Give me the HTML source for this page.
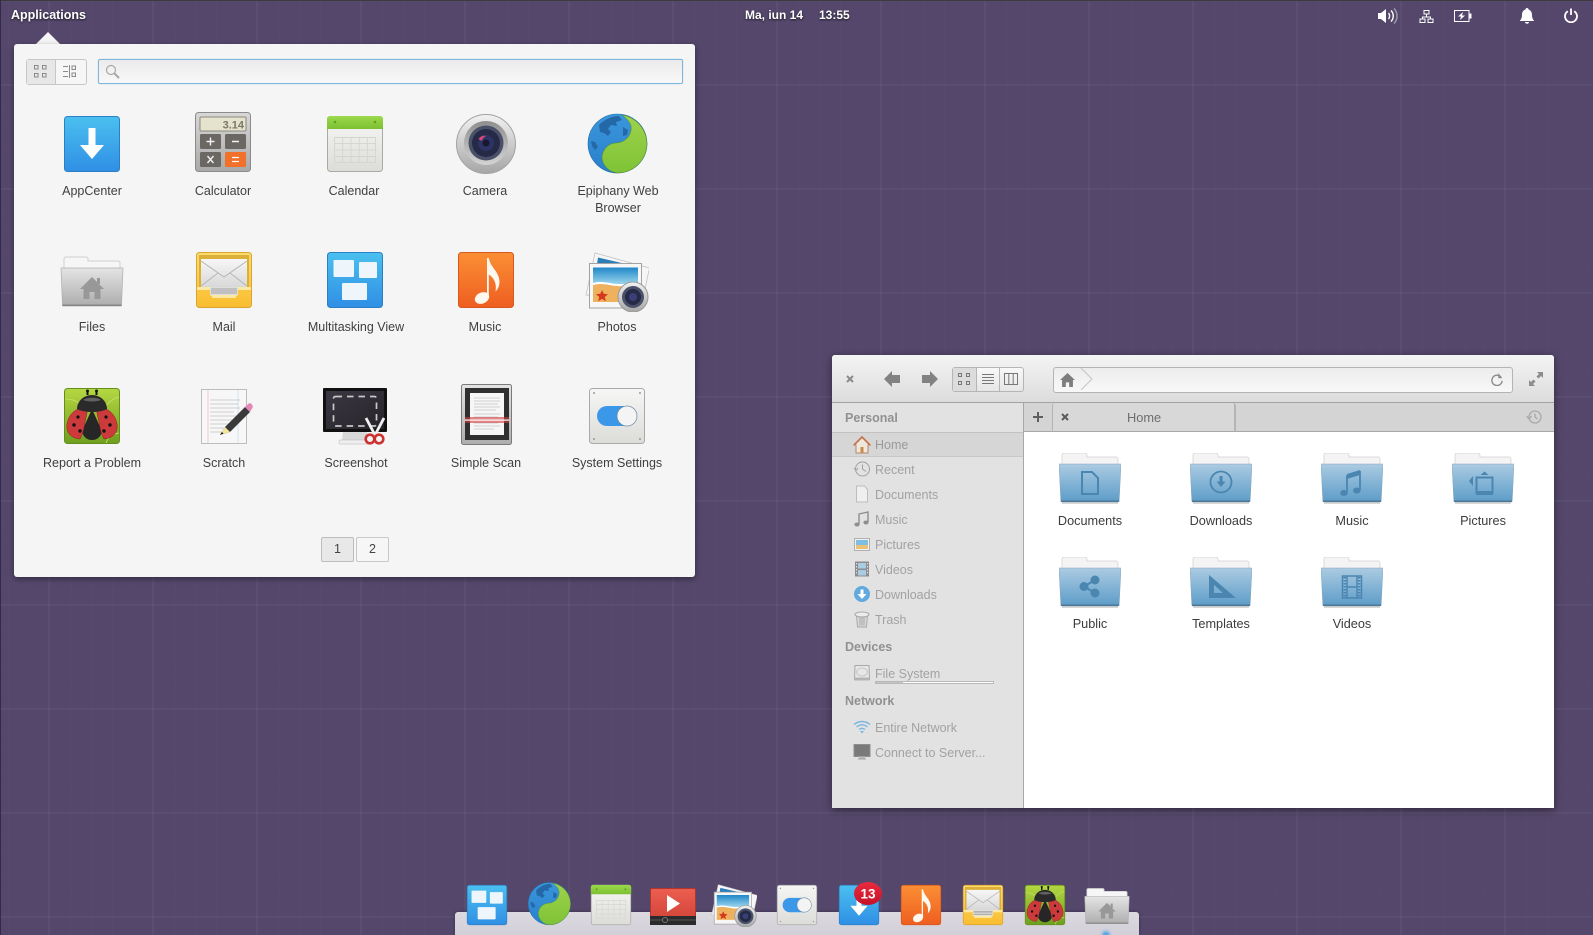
<!DOCTYPE html>
<html><head><meta charset="utf-8"><title>Desktop</title>
<style>
html,body{margin:0;padding:0;width:1593px;height:935px;overflow:hidden}
body{position:relative;font-family:"Liberation Sans",sans-serif;background-color:#54476b;
background-image:
linear-gradient(90deg,rgba(255,255,255,.035) 0,rgba(255,255,255,.035) 2px,transparent 2px),
linear-gradient(0deg,rgba(255,255,255,.032) 0,rgba(255,255,255,.032) 2px,transparent 2px),
linear-gradient(90deg,rgba(255,255,255,.012) 0,rgba(255,255,255,.012) 1px,transparent 1px),
linear-gradient(0deg,rgba(255,255,255,.012) 0,rgba(255,255,255,.012) 1px,transparent 1px);
background-size:104px 104px,104px 104px,20.8px 20.8px,20.8px 20.8px;
background-position:48px 0,0 -18px,8px 0,0 2px}
.a,.t,.c,svg.i,svg.s{position:absolute}
.t,.c{line-height:16px;white-space:nowrap}
.c{text-align:center;width:130px}
svg.i{width:64px;height:64px;overflow:visible}
svg.d{width:46px;height:46px}
svg.s{width:18px;height:18px;overflow:visible}
.pn{color:#fff;font-weight:bold;font-size:12.5px;text-shadow:0 1px 2px rgba(0,0,0,.7)}
.lb{font-size:12.5px;color:#3f3f3f}
.sh{font-size:12.5px;font-weight:bold;color:#919191}
.si{font-size:12.5px;color:#a2a2a2}
.fl{font-size:12.7px;color:#3c3c3c}
</style></head><body>

<svg width="0" height="0" style="position:absolute">
<defs>
<linearGradient id="gBlue" x1="0" y1="0" x2="0" y2="1"><stop offset="0" stop-color="#4bc0ef"/><stop offset="1" stop-color="#2f8fe5"/></linearGradient>
<linearGradient id="gGrey" x1="0" y1="0" x2="0" y2="1"><stop offset="0" stop-color="#d8d8d8"/><stop offset="1" stop-color="#a8a8a8"/></linearGradient>
<linearGradient id="gPale" x1="0" y1="0" x2="0" y2="1"><stop offset="0" stop-color="#f6f6f4"/><stop offset="1" stop-color="#dcdcd9"/></linearGradient>
<linearGradient id="gGreen" x1="0" y1="0" x2="0" y2="1"><stop offset="0" stop-color="#9cd94d"/><stop offset="1" stop-color="#7cc030"/></linearGradient>
<linearGradient id="gOrange" x1="0" y1="0" x2="0" y2="1"><stop offset="0" stop-color="#fb8f34"/><stop offset="1" stop-color="#ee5e21"/></linearGradient>
<linearGradient id="gFolder" x1="0" y1="0" x2="0" y2="1"><stop offset="0" stop-color="#e4e4e4"/><stop offset="1" stop-color="#adadad"/></linearGradient>
<linearGradient id="gBF" x1="0" y1="0" x2="0" y2="1"><stop offset="0" stop-color="#abcbe2"/><stop offset="1" stop-color="#5c9cc8"/></linearGradient>
<linearGradient id="gYel" x1="0" y1="0" x2="0" y2="1"><stop offset="0" stop-color="#fddc6a"/><stop offset="1" stop-color="#f9bd2f"/></linearGradient>
<linearGradient id="gBug" x1="0" y1="0" x2="0" y2="1"><stop offset="0" stop-color="#b5d742"/><stop offset="1" stop-color="#6f9e1f"/></linearGradient>
<linearGradient id="gEnv" x1="0" y1="0" x2="0" y2="1"><stop offset="0" stop-color="#f7f7f7"/><stop offset="1" stop-color="#d8d8d8"/></linearGradient>
<linearGradient id="gSky" x1="0" y1="0" x2="0" y2="1"><stop offset="0" stop-color="#1f86c8"/><stop offset="1" stop-color="#a6dcef"/></linearGradient>
<linearGradient id="gCam" x1="0" y1="0" x2="0" y2="1"><stop offset="0" stop-color="#f2f2f2"/><stop offset="1" stop-color="#a6a6a6"/></linearGradient>
<linearGradient id="gRing" x1="0" y1="0" x2="0" y2="1"><stop offset="0" stop-color="#8e8e8e"/><stop offset="1" stop-color="#d4d4d4"/></linearGradient>
<linearGradient id="gEG" x1="0" y1="0" x2="0" y2="1"><stop offset="0" stop-color="#9ed24a"/><stop offset="1" stop-color="#7fc336"/></linearGradient>
<linearGradient id="gEB" x1="0" y1="0" x2="0" y2="1"><stop offset="0" stop-color="#3a97dc"/><stop offset="1" stop-color="#2a7fcb"/></linearGradient>
<linearGradient id="gRed" x1="0" y1="0" x2="0" y2="1"><stop offset="0" stop-color="#ec5f50"/><stop offset="1" stop-color="#cf3f36"/></linearGradient>
<linearGradient id="gBadge" x1="0" y1="0" x2="0" y2="1"><stop offset="0" stop-color="#ea2a3e"/><stop offset="1" stop-color="#c51228"/></linearGradient>
<linearGradient id="gScr" x1="0" y1="0" x2="1" y2="1"><stop offset="0" stop-color="#3c3842"/><stop offset="1" stop-color="#26232a"/></linearGradient>

<symbol id="appcenter" viewBox="0 0 64 64"><rect x="4.500" y="4.500" width="55" height="55" rx="3" fill="url(#gBlue)" stroke="#2d7fc4"/><path d="M28.500 16h7v17h8.500L32 47 20 33h8.500z" fill="#fff"/></symbol>

<symbol id="calc" viewBox="0 0 64 64"><rect x="4.500" y="0.500" width="55" height="59" rx="3" fill="url(#gGrey)" stroke="#8b8b8b"/><rect x="9" y="5" width="46" height="14" rx="1" fill="#e5e3cd" stroke="#8a897a"/><text x="53" y="16.500" text-anchor="end" font-family="Liberation Sans" font-weight="bold" font-size="11" fill="#7a7866">3.14</text><rect x="9" y="22" width="21" height="15" rx="1.500" fill="#6b6864"/><rect x="34" y="22" width="21" height="15" rx="1.500" fill="#6b6864"/><rect x="9" y="40" width="21" height="15" rx="1.500" fill="#6b6864"/><rect x="34" y="40" width="21" height="15" rx="1.500" fill="#f1702a"/><path d="M19.500 25.500v8M15.500 29.500h8M41 29.500h7M16.500 44l6 7M22.500 44l-6 7" stroke="#f2f2f2" stroke-width="1.400" fill="none"/><path d="M41 45.500h7M41 49.500h7" stroke="#fff" stroke-width="1.200"/></symbol>

<symbol id="calendar" viewBox="0 0 64 64"><rect x="4.500" y="4.500" width="55" height="55" rx="3" fill="url(#gPale)" stroke="#a9a9a6"/><path d="M4 17V7a3 3 0 0 1 3-3h50a3 3 0 0 1 3 3v10z" fill="url(#gGreen)"/><circle cx="12" cy="10" r="1.300" fill="#5f9f22"/><circle cx="52" cy="10" r="1.300" fill="#5f9f22"/><path d="M11.500 25.500h41v25h-41zM11.500 31.500h41M11.500 38h41M11.500 44.500h41M19.700 25.500v25M28 25.500v25M36.200 25.500v25M44.400 25.500v25" fill="none" stroke="#d6d6d1"/></symbol>

<symbol id="camera" viewBox="0 0 64 64"><circle cx="32" cy="32" r="29.500" fill="url(#gCam)" stroke="#a3a3a3"/><circle cx="32" cy="31" r="22" fill="url(#gRing)"/><circle cx="32" cy="31" r="17.500" fill="#4a5068"/><circle cx="32" cy="31" r="14" fill="#252b47"/><circle cx="32" cy="31" r="8" fill="#2e3365"/><circle cx="32" cy="31" r="3.500" fill="#15182f"/><path d="M24.500 27c2-3 5-4 7.500-3-2 1-3.500 3-4.500 5z" fill="#d24a78"/></symbol>

<symbol id="epiphany" viewBox="0 0 64 64"><ellipse cx="32.500" cy="31.500" rx="29.500" ry="29.500" fill="url(#gEB)" stroke="#1f6ba8" stroke-width=".6"/><path d="M14 13c5-5 12-9 20-9l3 4-6 2 1 4-6-1-3 4 3 3-3 4-4-3-4-1zM38 15l5 3-1 5-4 1zM6 29l4 1 3 5-3 3-3-4z" fill="#2468a8"/><path d="M37 3C44 8 47 13 46 18 45 26 38 31 30 31 22 32 17 39 17 46 18 54 24 60 33 61A29.500 29.500 0 0 0 62 32 29.500 29.500 0 0 0 37 3Z" fill="url(#gEG)" stroke="#4e8a24" stroke-width=".5"/></symbol>

<symbol id="files" viewBox="0 0 64 64"><path d="M4 21V11a2 2 0 0 1 2-2h20a2 2 0 0 1 2 2v2h30a2 2 0 0 1 2 2v6z" fill="#f6f6f6" stroke="#d0d0d0"/><path d="M1 20h62l-1.500 38h-59z" fill="url(#gFolder)" stroke="#aeaeae" stroke-width=".7"/><rect x="2.500" y="56.500" width="59" height="1.500" fill="#858585"/><path d="M32 29L44 41h-3.500v10h-6v-7h-5v7h-6V41H20z" fill="#989898"/><rect x="37" y="30" width="3" height="6" fill="#989898"/></symbol>

<symbol id="mail" viewBox="0 0 64 64"><rect x="4.500" y="4.500" width="55" height="55" rx="3" fill="url(#gYel)" stroke="#d9a431"/><rect x="7" y="7" width="50" height="32" fill="#dcae3a"/><path d="M9 11h46v28H9z" fill="url(#gEnv)"/><path d="M9 13l23 16L55 13M9 38l17-13M55 38L38 25" fill="none" stroke="#b5b5b5"/><path d="M5 39h13v7a2 2 0 0 0 2 2h24a2 2 0 0 0 2-2v-7h13v3H5z" fill="#fce8a3"/><path d="M18 39h28v8H18z" fill="#dedede"/><path d="M19 41h26M19 43h26M19 45h26" stroke="#a2a2a2"/><rect x="20" y="47" width="24" height="3" rx="1" fill="#fce8a3"/></symbol>

<symbol id="multi" viewBox="0 0 64 64"><rect x="4.500" y="4.500" width="55" height="55" rx="3" fill="url(#gBlue)" stroke="#2d7fc4"/><rect x="10.500" y="12" width="20.500" height="17" rx="1" fill="#eef6fb"/><rect x="36" y="14" width="18" height="16" rx="1" fill="#eef6fb"/><rect x="19" y="35" width="25" height="17" rx="1" fill="#eef6fb"/></symbol>

<symbol id="music" viewBox="0 0 64 64"><rect x="4.500" y="4.500" width="55" height="55" rx="3" fill="url(#gOrange)" stroke="#d8581e"/><path d="M33 10h1.800c1 9 10.700 13.500 10.700 24 0 4-1.800 7.500-4 9.500 1.300-6.500-.5-13-6.700-17V49h-1.800z" fill="#fff8ee"/><ellipse cx="28" cy="50" rx="7.500" ry="5.500" transform="rotate(-25 28 50)" fill="#fff8ee"/></symbol>

<symbol id="photos" viewBox="0 0 64 64"><path d="M10 5l54.500 15L58 50 1 47z" fill="#f6f6f6" stroke="#bdbdbd" stroke-width=".7"/><path d="M13 9.500L41 16H12z" fill="#2b7db9"/><rect x="4.500" y="15.500" width="52" height="44.500" fill="#f7f7f7" stroke="#a2a2a2"/><rect x="8" y="19.500" width="45" height="18" fill="url(#gSky)"/><path d="M8 37c12-3 18 2 30 1 6 0 10 1 15 3v13H8z" fill="#eeb25f"/><path d="M8 35c12-3 18 2 30 1 6 0 10 1 15 3v2c-5-2-9-3-15-3-12 1-18-4-30-1z" fill="#fff"/><path d="M17 42l1.700 3.800 4.300.4-3.200 2.800 1 4.200-3.800-2.300-3.800 2.300 1-4.200-3.200-2.800 4.300-.4z" fill="#d6381e"/><circle cx="48" cy="49" r="15" fill="url(#gCam)" stroke="#9a9a9a"/><circle cx="48" cy="49" r="11" fill="#4a5068"/><circle cx="48" cy="49" r="8" fill="#252b47"/><circle cx="48" cy="49" r="4" fill="#3a3f78"/></symbol>

<symbol id="bug" viewBox="0 0 64 64"><rect x="4.500" y="4.500" width="55" height="55" rx="3" fill="url(#gBug)" stroke="#648f1c"/><path d="M5 15c8 0 13 2 16 7M59 13c-7 2-11 5-13 10M46 59c2-6 7-9 13-10" fill="none" stroke="#c7e36c" stroke-width=".8"/><path d="M27.500 11V8M36.500 11V8" stroke="#111" stroke-width="2"/><circle cx="27.500" cy="7" r="1.500" fill="#111"/><circle cx="36.500" cy="7" r="1.500" fill="#111"/><path d="M32 25l10 22c-1 6-5 9-10 9s-9-3-10-9z" fill="#262626"/><path d="M28 24C19 22 9 28 7 40c-1 8 3 14 13 15 1-2 2-4 3-7z" fill="#cc3a3b" stroke="#8a1f20" stroke-width=".5"/><path d="M36 24c9-2 19 4 21 16 1 8-3 14-13 15-1-2-2-4-3-7z" fill="#cc3a3b" stroke="#8a1f20" stroke-width=".5"/><path d="M17 25c0-8 7-14 15-14s15 6 15 14c-8 4-22 4-30 0z" fill="#2a2a2a"/><path d="M23 16c4-3 14-3 18 0-5 2-13 2-18 0z" fill="#626262"/><g fill="#111"><circle cx="18" cy="33" r="1.600"/><circle cx="14" cy="41" r="1.700"/><circle cx="20" cy="47" r="1.700"/><circle cx="46" cy="33" r="1.600"/><circle cx="50" cy="41" r="1.700"/><circle cx="44" cy="47" r="1.700"/></g></symbol>

<symbol id="scratch" viewBox="0 0 64 64"><rect x="9.500" y="5.500" width="45" height="54" fill="#f7f7f8" stroke="#bdbdbd"/><path d="M16 6v53" stroke="#f0caca"/><path d="M46 6v53" stroke="#d4e0f0"/><path d="M18 16h30M18 20h28M18 24h30M18 28h24M18 32h26M18 36h22M18 40h20M18 44h14M18 48h16" stroke="#a8a8a8" stroke-width=".6"/><path d="M28 51l5-8 20-20 5 5-20 20z" fill="#3a3a3a"/><path d="M53 23l3-3c1-1 3-1 3.500 0l1 1.500c.7 1 0 2.500-.5 3L58 28z" fill="#e486b8"/><path d="M28 51l5-8 5 5z" fill="#f3e59a"/><path d="M28 51l2-3 1.500 1.500z" fill="#111"/></symbol>

<symbol id="screenshot" viewBox="0 0 64 64"><path d="M20 48h24l1 8H19z" fill="#d8d8d8"/><rect x="16" y="56" width="30" height="4" rx="1" fill="#efefef" stroke="#b4b4b4" stroke-width=".5"/><rect x="0" y="4" width="64" height="44" rx="1" fill="#111"/><rect x="3" y="7" width="58" height="38" fill="url(#gScr)"/><rect x="10.500" y="12.500" width="43" height="29.500" rx="2" fill="none" stroke="#c8c8c8" stroke-width="1.700" stroke-dasharray="6.500 5"/><path d="M43 34l9 17M61 34l-9 17" stroke="#f0f0f0" stroke-width="2.800"/><circle cx="47" cy="55" r="4.300" fill="#f3f3f3" stroke="#cc3232" stroke-width="2.600"/><circle cx="56" cy="55" r="4.300" fill="#f3f3f3" stroke="#cc3232" stroke-width="2.600"/></symbol>

<symbol id="scan" viewBox="0 0 64 64"><rect x="6.500" y="0.500" width="50" height="60" rx="2" fill="url(#gFolder)" stroke="#7a7a7a"/><rect x="10" y="4" width="44" height="52" fill="#2f2f2f"/><rect x="15" y="9" width="34" height="42" fill="#f6f6f6"/><path d="M19 14h26M19 17h26M19 20h24M19 23h26M19 26h22M19 30h26M19 33h24M19 39h24M19 42h26M19 45h20" stroke="#aaa" stroke-width=".6"/><rect x="10" y="33" width="44" height="6" fill="#d23c3c" opacity=".6"/><rect x="10" y="35.500" width="44" height="1.200" fill="#fff"/></symbol>

<symbol id="settings" viewBox="0 0 64 64"><rect x="4.500" y="4.500" width="55" height="55" rx="3" fill="url(#gPale)" stroke="#a9a9a9"/><g fill="#9a9a9a"><circle cx="9" cy="9" r="1"/><circle cx="55" cy="9" r="1"/><circle cx="9" cy="55" r="1"/><circle cx="55" cy="55" r="1"/></g><rect x="12" y="22" width="40" height="20" rx="10" fill="#3b97e8"/><circle cx="42" cy="32" r="10" fill="#f4f4f4" stroke="#6a8aa5" stroke-width=".7"/></symbol>

<symbol id="folder" viewBox="0 0 62 51"><path d="M3 12V2a2 2 0 0 1 2-2h21a2 2 0 0 1 2 2v2h29a2 2 0 0 1 2 2v6z" fill="#f4f4f4" stroke="#cfcfcf" stroke-width=".7"/><rect x="3" y="49" width="56" height="2" fill="#d8d8d8"/><path d="M0 11h62l-1.800 37a1 1 0 0 1-1 1H2.800a1 1 0 0 1-1-1z" fill="url(#gBF)" stroke="#8aa5ba" stroke-width=".5"/><rect x="2" y="47.500" width="58" height="1.500" fill="#4f7896"/></symbol>
</defs></svg>

<!-- top panel -->
<div class="a" style="left:0;top:0;width:1593px;height:1px;background:#3d3a3e"></div>
<div class="a" style="left:0;top:0;width:1px;height:935px;background:#33294a"></div>
<div class="t pn" style="left:11px;top:7px">Applications</div>
<div class="t pn" style="left:745px;top:7px;font-size:12px">Ma, iun 14</div>
<div class="t pn" style="left:819px;top:7px;font-size:12px">13:55</div>

<svg class="a" style="left:1376px;top:7px" width="24" height="18" viewBox="0 0 24 18"><path d="M2 6h3l5-4v14l-5-4H2z" fill="#fff"/><path d="M12.500 6c1.500 1.500 1.500 4.500 0 6M15 3.500c3 3 3 8 0 11" stroke="#fff" stroke-width="1.400" fill="none"/><path d="M18 1.500c4 4 4 11 0 15" stroke="#fff" stroke-opacity=".45" stroke-width="1.400" fill="none"/></svg>
<svg class="a" style="left:1419px;top:10px" width="15" height="14" viewBox="0 0 15 14" fill="none" stroke="#fff"><rect x="5" y=".5" width="5" height="3.500"/><rect x="1" y="9" width="5" height="3.500"/><rect x="9" y="9" width="5" height="3.500"/><path d="M7.500 4v3M3.500 9V7h8v2"/></svg>
<svg class="a" style="left:1454px;top:10px" width="18" height="12" viewBox="0 0 18 12"><rect x=".5" y=".5" width="14.500" height="11" fill="none" stroke="#fff"/><rect x="15.500" y="3.500" width="2" height="5" fill="#fff"/><path d="M9 2L4 6.500h3L6 10l5-4.500H8z" fill="#fff"/></svg>
<svg class="a" style="left:1520px;top:8px" width="14" height="16" viewBox="0 0 14 16"><path d="M7 0c1 0 1.500.7 1.500 1.500C11 2.300 12 4.500 12 7c0 3 1 4.500 2 5.500v.5H0v-.5C1 11.500 2 10 2 7c0-2.500 1-4.700 3.500-5.500C5.500.7 6 0 7 0z" fill="#fff"/><path d="M5 14h4c0 1-.9 1.800-2 1.800S5 15 5 14z" fill="#fff"/></svg>
<svg class="a" style="left:1564px;top:8px" width="14" height="15" viewBox="0 0 14 15" fill="none" stroke="#fff" stroke-width="1.800"><path d="M7 .5v6.500"/><path d="M3.800 3.200a6 6 0 1 0 6.400 0"/></svg>

<!-- app menu -->
<svg class="a" style="left:35px;top:31px" width="26" height="14"><path d="M0 14L13 1l13 13z" fill="#f5f5f5"/></svg>
<div class="a" style="left:14px;top:44px;width:681px;height:533px;background:#f5f5f5;border-radius:3px;box-shadow:0 2px 6px rgba(0,0,0,.4)"></div>
<div class="a" style="left:26px;top:59px;width:59px;height:24px;border:1px solid #c6c6c6;border-radius:3px;background:#f6f6f6"></div>
<div class="a" style="left:27px;top:60px;width:28px;height:24px;background:#e7e7e7;border-right:1px solid #c6c6c6"></div>
<svg class="a" style="left:33px;top:64px" width="15" height="15" viewBox="0 0 15 15" fill="none" stroke="#8a8a8a"><rect x="1.500" y="1.500" width="3.500" height="3.500"/><rect x="9.500" y="1.500" width="3.500" height="3.500"/><rect x="1.500" y="9.500" width="3.500" height="3.500"/><rect x="9.500" y="9.500" width="3.500" height="3.500"/></svg>
<svg class="a" style="left:62px;top:64px" width="15" height="15" viewBox="0 0 15 15" fill="none" stroke="#8a8a8a"><path d="M1 2.500h5M1 7.500h5M1 12.500h5M7.500 1v13"/><rect x="10" y="2" width="3.500" height="3.500"/><rect x="10" y="9" width="3.500" height="3.500"/></svg>
<div class="a" style="left:98px;top:59px;width:583px;height:23px;border:1px solid #7fb6dd;border-radius:2px;background:linear-gradient(#ebebeb,#f8f8f8);box-shadow:0 0 1px #9cc8e8"></div>
<svg class="a" style="left:105px;top:64px" width="16" height="15" viewBox="0 0 16 15" fill="none" stroke="#a8a8a8"><circle cx="6" cy="6" r="4.500" stroke-width="1.200"/><path d="M9.500 9.500l4.500 4.500" stroke-width="2"/></svg>

<svg class="i" style="left:60px;top:112px"><use href="#appcenter"/></svg>
<svg class="i" style="left:191px;top:112px"><use href="#calc"/></svg>
<svg class="i" style="left:323px;top:112px"><use href="#calendar"/></svg>
<svg class="i" style="left:454px;top:112px"><use href="#camera"/></svg>
<svg class="i" style="left:585px;top:112px"><use href="#epiphany"/></svg>
<svg class="i" style="left:60px;top:248px"><use href="#files"/></svg>
<svg class="i" style="left:192px;top:248px"><use href="#mail"/></svg>
<svg class="i" style="left:323px;top:248px"><use href="#multi"/></svg>
<svg class="i" style="left:454px;top:248px"><use href="#music"/></svg>
<svg class="i" style="left:585px;top:248px"><use href="#photos"/></svg>
<svg class="i" style="left:60px;top:384px"><use href="#bug"/></svg>
<svg class="i" style="left:192px;top:384px"><use href="#scratch"/></svg>
<svg class="i" style="left:323px;top:384px"><use href="#screenshot"/></svg>
<svg class="i" style="left:455px;top:384px"><use href="#scan"/></svg>
<svg class="i" style="left:585px;top:384px"><use href="#settings"/></svg>

<div class="c lb" style="left:27px;top:183px">AppCenter</div>
<div class="c lb" style="left:158px;top:183px">Calculator</div>
<div class="c lb" style="left:289px;top:183px">Calendar</div>
<div class="c lb" style="left:420px;top:183px">Camera</div>
<div class="c lb" style="left:553px;top:183px">Epiphany Web</div>
<div class="c lb" style="left:553px;top:200px">Browser</div>
<div class="c lb" style="left:27px;top:319px">Files</div>
<div class="c lb" style="left:159px;top:319px">Mail</div>
<div class="c lb" style="left:291px;top:319px">Multitasking View</div>
<div class="c lb" style="left:420px;top:319px">Music</div>
<div class="c lb" style="left:552px;top:319px">Photos</div>
<div class="c lb" style="left:27px;top:455px">Report a Problem</div>
<div class="c lb" style="left:159px;top:455px">Scratch</div>
<div class="c lb" style="left:291px;top:455px">Screenshot</div>
<div class="c lb" style="left:421px;top:455px">Simple Scan</div>
<div class="c lb" style="left:552px;top:455px">System Settings</div>

<div class="a" style="left:321px;top:537px;width:31px;height:23px;border:1px solid #bdbdbd;border-radius:2px;background:#e8e8e8;font-size:12.500px;line-height:23px;text-align:center;color:#444">1</div>
<div class="a" style="left:356px;top:537px;width:31px;height:23px;border:1px solid #c8c8c8;border-radius:2px;background:#f6f6f6;font-size:12.500px;line-height:23px;text-align:center;color:#444">2</div>

<!-- files window -->
<div class="a" style="left:832px;top:355px;width:722px;height:453px;background:#fff;border-radius:3px 3px 0 0;box-shadow:0 2px 8px rgba(0,0,0,.45)"></div>
<div class="a" style="left:832px;top:355px;width:722px;height:47px;background:linear-gradient(#f4f4f4,#dcdcdc);border-bottom:1px solid #a3a3a3;border-radius:3px 3px 0 0"></div>
<svg class="a" style="left:845px;top:374px" width="10" height="10" viewBox="0 0 10 10"><path d="M2 2l6 6M8 2L2 8" stroke="#8a8a8a" stroke-width="2"/></svg>
<svg class="a" style="left:884px;top:371px" width="17" height="16" viewBox="0 0 17 16"><path d="M8 0v4h8v8H8v4L0 8z" fill="#828282"/></svg>
<svg class="a" style="left:921px;top:371px" width="17" height="16" viewBox="0 0 17 16"><path d="M9 0v4H1v8h8v4l8-8z" fill="#828282"/></svg>
<div class="a" style="left:952px;top:367px;width:70px;height:23px;border:1px solid #b5b5b5;border-radius:3px;background:linear-gradient(#f8f8f8,#e6e6e6)"></div>
<div class="a" style="left:953px;top:368px;width:23px;height:23px;background:#dcdcdc;border-right:1px solid #b5b5b5"></div>
<div class="a" style="left:999px;top:368px;width:1px;height:23px;background:#b5b5b5"></div>
<svg class="a" style="left:957px;top:372px" width="14" height="14" viewBox="0 0 14 14" fill="none" stroke="#777"><rect x="1.500" y="1.500" width="3" height="3"/><rect x="9.500" y="1.500" width="3" height="3"/><rect x="1.500" y="9.500" width="3" height="3"/><rect x="9.500" y="9.500" width="3" height="3"/></svg>
<svg class="a" style="left:981px;top:372px" width="14" height="14" viewBox="0 0 14 14" stroke="#777"><path d="M1 2.500h12M1 5.500h12M1 8.500h12M1 11.500h12"/></svg>
<svg class="a" style="left:1004px;top:372px" width="14" height="14" viewBox="0 0 14 14" fill="none" stroke="#777"><rect x=".5" y="1.500" width="13" height="11"/><path d="M4.800 1.500v11M9.200 1.500v11"/></svg>
<div class="a" style="left:1053px;top:367px;width:458px;height:24px;border:1px solid #b4b4b4;border-radius:3px;background:linear-gradient(#ececec,#f8f8f8)"></div>
<svg class="a" style="left:1060px;top:373px" width="15" height="14" viewBox="0 0 16 15"><path d="M8 0l8 7.500h-2.200V15h-4v-5H6.200v5h-4V7.500H0z" fill="#7d7d7d"/></svg>
<svg class="a" style="left:1080px;top:368px" width="13" height="22" viewBox="0 0 13 22"><path d="M1 0l11 11L1 22" fill="none" stroke="#c4c4c4"/></svg>
<svg class="a" style="left:1491px;top:373px" width="12" height="13" viewBox="0 0 14 15" fill="none"><path d="M11.500 4.500A6 6 0 1 0 13 9" stroke="#8c8c8c" stroke-width="1.600"/><path d="M8.500 0v6h4.800z" fill="#8c8c8c"/></svg>
<svg class="a" style="left:1529px;top:372px" width="14" height="14" viewBox="0 0 14 14" fill="#8c8c8c"><path d="M8 0h6v6l-2-2-2.500 2.500-2-2L10 2zM0 8l2 2 2.500-2.500 2 2L4 12l2 2H0z"/></svg>

<!-- sidebar -->
<div class="a" style="left:832px;top:403px;width:191px;height:405px;background:#e2e2e2;border-right:1px solid #a8a8a8"></div>
<div class="t sh" style="left:845px;top:410px">Personal</div>
<div class="a" style="left:832px;top:432px;width:191px;height:23px;background:#d6d6d6;border-top:1px solid #c2c2c2;border-bottom:1px solid #c8c8c8"></div>
<div class="t si" style="left:875px;top:437px;color:#9a9a9a">Home</div>
<div class="t si" style="left:875px;top:462px">Recent</div>
<div class="t si" style="left:875px;top:487px">Documents</div>
<div class="t si" style="left:875px;top:512px">Music</div>
<div class="t si" style="left:875px;top:537px">Pictures</div>
<div class="t si" style="left:875px;top:562px">Videos</div>
<div class="t si" style="left:875px;top:587px">Downloads</div>
<div class="t si" style="left:875px;top:612px">Trash</div>
<div class="t sh" style="left:845px;top:639px">Devices</div>
<div class="t si" style="left:875px;top:666px">File System</div>
<div class="a" style="left:875px;top:681px;width:117px;height:1px;border:1px solid #b8b8b8;background:#fff"></div>
<div class="a" style="left:876px;top:682px;width:27px;height:1px;background:#c4c4c4"></div>
<div class="t sh" style="left:845px;top:693px">Network</div>
<div class="t si" style="left:875px;top:720px">Entire Network</div>
<div class="t si" style="left:875px;top:745px">Connect to Server...</div>

<svg class="s" style="left:853px;top:436px" viewBox="0 0 18 18"><path d="M9 1L17 9h-2v8H3V9H1z" fill="#efe6dc" stroke="#b5876a"/><path d="M1 9l8-8 8 8" fill="none" stroke="#c6714a" stroke-width="1.600"/><rect x="7.500" y="11" width="3" height="6" fill="#c98a4d"/></svg>
<svg class="s" style="left:853px;top:460px" viewBox="0 0 18 18" fill="none" stroke="#a0a0a0"><circle cx="9.500" cy="9" r="7"/><path d="M9.500 4.500V9l3.500 2.500"/><path d="M1 8l2 2.500L5 8" /></svg>
<svg class="s" style="left:853px;top:485px" viewBox="0 0 18 18"><path d="M3.500 1h8l3 3.500v12.500h-11z" fill="#efefef" stroke="#bdbdbd"/></svg>
<svg class="s" style="left:853px;top:510px" viewBox="0 0 18 18"><path d="M6 14V4l9-2v10" fill="none" stroke="#8e8e8e" stroke-width="1.400"/><ellipse cx="4" cy="14.500" rx="2.600" ry="2" fill="#8e8e8e"/><ellipse cx="13" cy="12.500" rx="2.600" ry="2" fill="#8e8e8e"/></svg>
<svg class="s" style="left:853px;top:535px" viewBox="0 0 18 18"><rect x="1.500" y="3.500" width="15" height="12" fill="#f2f2f2" stroke="#b0b0b0"/><rect x="3" y="5" width="12" height="5" fill="#7cbfe2"/><rect x="3" y="10" width="12" height="4" fill="#edc078"/></svg>
<svg class="s" style="left:853px;top:560px" viewBox="0 0 18 18"><rect x="2" y="1.500" width="14" height="15" fill="#8c8c8c"/><rect x="5" y="3" width="8" height="5.500" fill="#a8cce2"/><rect x="5" y="10" width="8" height="5.500" fill="#a8cce2"/><path d="M3.500 3v12M14.500 3v12" stroke="#ddd" stroke-dasharray="1.500 1.500"/></svg>
<svg class="s" style="left:853px;top:585px" viewBox="0 0 18 18"><circle cx="9" cy="9" r="8" fill="#62a9df"/><path d="M7.500 4.500h3V9h3L9 14 4.500 9h3z" fill="#fff"/></svg>
<svg class="s" style="left:853px;top:610px" viewBox="0 0 18 18"><path d="M3.500 5l1 12h9l1-12z" fill="#d8d8d8" stroke="#a8a8a8"/><ellipse cx="9" cy="4.500" rx="7" ry="2.500" fill="#ececec" stroke="#a8a8a8"/><path d="M7 7.500v8M9 7.500v8M11 7.500v8" stroke="#a8a8a8"/></svg>
<svg class="s" style="left:853px;top:664px" viewBox="0 0 18 18"><path d="M2 1.500h14l.5 14h-15z" fill="#e7e7e7" stroke="#a8a8a8"/><ellipse cx="9" cy="8" rx="5.500" ry="4" fill="none" stroke="#c6c6c6"/><rect x="1.500" y="13.500" width="15" height="3" fill="#b4b4b4"/></svg>
<svg class="s" style="left:853px;top:718px" viewBox="0 0 18 18" fill="none" stroke="#79b7e0" stroke-width="1.400"><path d="M1 6.500c5-4 11-4 16 0M3.500 9c3.500-2.800 7.500-2.800 11 0M6 11.500c2-1.500 4-1.500 6 0"/><path d="M9 15.500l-2-2.500h4z" fill="#79b7e0" stroke="none"/></svg>
<svg class="s" style="left:853px;top:743px" viewBox="0 0 18 18"><rect x="1" y="1.500" width="16" height="12" fill="#7a7a7a" stroke="#8e8e8e"/><rect x="6" y="13.500" width="6" height="2" fill="#bbb"/><rect x="5" y="15.500" width="8" height="1" fill="#a2a2a2"/></svg>

<!-- tab bar -->
<div class="a" style="left:1024px;top:403px;width:530px;height:28px;background:#d4d4d4;border-bottom:1px solid #a8a8a8"></div>
<div class="a" style="left:1052px;top:403px;width:181px;height:28px;background:#d8d8d8;border-left:1px solid #b4b4b4;border-right:2px solid #b4b4b4;border-radius:3px 3px 0 0;border-bottom:1px solid #a8a8a8"></div>
<svg class="a" style="left:1032px;top:411px" width="12" height="12" viewBox="0 0 12 12"><path d="M6 1v10M1 6h10" stroke="#5f5f5f" stroke-width="2"/></svg>
<svg class="a" style="left:1060px;top:412px" width="10" height="10" viewBox="0 0 10 10"><path d="M2 2l6 6M8 2L2 8" stroke="#5a5a5a" stroke-width="2"/></svg>
<div class="t" style="left:1127px;top:410px;font-size:12.800px;color:#6e6e6e">Home</div>
<svg class="a" style="left:1526px;top:409px" width="16" height="16" viewBox="0 0 16 16" fill="none" stroke="#aaa" stroke-width="1.300"><circle cx="9" cy="8" r="6"/><path d="M9 4.500V8l2.500 2"/><path d="M0.500 7l2.500 3 2.500-3" /></svg>

<!-- folders -->
<svg class="a" style="left:1059px;top:453px;overflow:visible" width="62" height="51" viewBox="0 0 62 51"><use href="#folder"/><path d="M23 19h10l6 6v16H23z" fill="none" stroke="#4a86b0" stroke-width="2"/></svg>
<svg class="a" style="left:1190px;top:453px;overflow:visible" width="62" height="51" viewBox="0 0 62 51"><use href="#folder"/><circle cx="31" cy="29" r="10.500" fill="none" stroke="#4a86b0" stroke-width="1.800"/><path d="M29.500 23h3v5.500h3L31 34l-4.500-5.500h3z" fill="#4a86b0"/></svg>
<svg class="a" style="left:1321px;top:453px;overflow:visible" width="62" height="51" viewBox="0 0 62 51"><use href="#folder"/><path d="M26 39V23l13-4v18" fill="none" stroke="#4a86b0" stroke-width="1.800"/><path d="M26 21l13-4v5l-13 4z" fill="#4a86b0"/><ellipse cx="23" cy="40" rx="3.800" ry="3" fill="#4a86b0"/><ellipse cx="35.800" cy="37.500" rx="3.800" ry="3" fill="#4a86b0"/></svg>
<svg class="a" style="left:1452px;top:453px;overflow:visible" width="62" height="51" viewBox="0 0 62 51"><use href="#folder"/><rect x="24.500" y="24.500" width="16" height="15" fill="none" stroke="#4a86b0" stroke-width="2"/><path d="M24 38h17v4H24z" fill="#4a86b0"/><path d="M28.500 22l4-3.500 4 3.500zM21 23l-4 5 4 5z" fill="#4a86b0"/></svg>
<svg class="a" style="left:1059px;top:557px;overflow:visible" width="62" height="51" viewBox="0 0 62 51"><use href="#folder"/><path d="M36 23L25 29.500 36 36" fill="none" stroke="#4a86b0" stroke-width="2"/><circle cx="36" cy="23" r="4.500" fill="#4a86b0"/><circle cx="25" cy="29.500" r="4.500" fill="#4a86b0"/><circle cx="36" cy="36" r="4.500" fill="#4a86b0"/></svg>
<svg class="a" style="left:1190px;top:557px;overflow:visible" width="62" height="51" viewBox="0 0 62 51"><use href="#folder"/><path d="M19 18l27 23H19zM24 28v8h9z" fill="#4a86b0" fill-rule="evenodd"/></svg>
<svg class="a" style="left:1321px;top:557px;overflow:visible" width="62" height="51" viewBox="0 0 62 51"><use href="#folder"/><rect x="21.500" y="19" width="19" height="22" fill="none" stroke="#4a86b0" stroke-width="1.500"/><path d="M26 19v22M36 19v22M26 30h10" stroke="#4a86b0" stroke-width="1.500"/><path d="M23.800 20v20M38.200 20v20" stroke="#4a86b0" stroke-width="2.500" stroke-dasharray="1.500 1.500"/></svg>

<div class="c fl" style="left:1025px;top:513px">Documents</div>
<div class="c fl" style="left:1156px;top:513px">Downloads</div>
<div class="c fl" style="left:1287px;top:513px">Music</div>
<div class="c fl" style="left:1418px;top:513px">Pictures</div>
<div class="c fl" style="left:1025px;top:616px">Public</div>
<div class="c fl" style="left:1156px;top:616px">Templates</div>
<div class="c fl" style="left:1287px;top:616px">Videos</div>

<!-- dock -->
<div class="a" style="left:455px;top:912px;width:684px;height:23px;background:linear-gradient(#dcd9e0,#d2cfd8);border-radius:3px 3px 0 0;box-shadow:0 0 3px rgba(0,0,0,.35)"></div>
<svg class="i d" style="left:464px;top:882px"><use href="#multi"/></svg>
<svg class="i d" style="left:526px;top:881px"><use href="#epiphany"/></svg>
<svg class="i d" style="left:588px;top:882px"><use href="#calendar"/></svg>
<svg class="a" style="left:650px;top:888px" width="46" height="37" viewBox="0 0 46 37"><rect x=".5" y=".5" width="45" height="36" rx="1.500" fill="url(#gRed)" stroke="#b3352e"/><rect x="0" y="28" width="46" height="9" fill="#2b2b2b"/><path d="M0 32h46" stroke="#555"/><circle cx="15" cy="32" r="2.500" fill="#2b2b2b" stroke="#777"/><path d="M17 7l13 8.500L17 24z" fill="#fff"/></svg>
<svg class="i d" style="left:711px;top:881px"><use href="#photos"/></svg>
<svg class="i d" style="left:774px;top:882px"><use href="#settings"/></svg>
<svg class="i d" style="left:836px;top:882px"><use href="#appcenter"/></svg>
<svg class="a" style="left:853px;top:881px" width="30" height="25" viewBox="0 0 30 25"><ellipse cx="15" cy="12.500" rx="14" ry="11.500" fill="url(#gBadge)"/><text x="15" y="17.500" text-anchor="middle" font-family="Liberation Sans" font-weight="bold" font-size="13.500" fill="#fff">13</text></svg>
<svg class="i d" style="left:898px;top:882px"><use href="#music"/></svg>
<svg class="i d" style="left:960px;top:882px"><use href="#mail"/></svg>
<svg class="i d" style="left:1022px;top:882px"><use href="#bug"/></svg>
<svg class="i d" style="left:1084px;top:882px"><use href="#files"/></svg>
<div class="a" style="left:1099px;top:928px;width:14px;height:7px;overflow:hidden"><div class="a" style="left:0;top:0;width:14px;height:14px;border-radius:50%;background:radial-gradient(#5aa7e6 0,#5aa7e6 20%,rgba(90,167,230,.25) 45%,transparent 70%)"></div></div>

</body></html>
